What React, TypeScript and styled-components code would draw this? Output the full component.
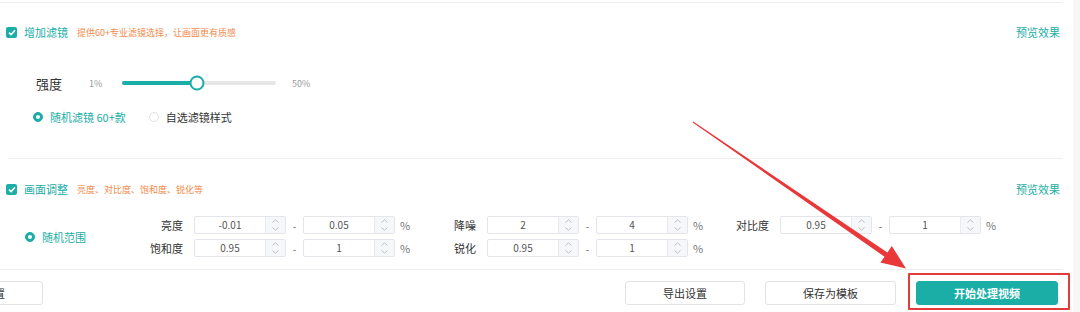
import React from "react";
import styled, { createGlobalStyle } from "styled-components";

const TEAL = "#1aaea6";
const ORANGE = "#f28a4c";

const Global = createGlobalStyle`
  html, body { margin: 0; padding: 0; background: #fff; }
  body { font-family: "Noto Sans CJK SC", "Noto Sans", sans-serif; color: #333; }
  * { box-sizing: border-box; }
`;

const Page = styled.div`
  position: relative;
  width: 1080px;
  height: 312px;
  overflow: hidden;
  display: flex;
`;

const Main = styled.div`
  flex: 1;
  display: flex;
  flex-direction: column;
  padding-top: 2px;
`;

const ScrollStrip = styled.div`
  width: 7px;
  background: #f7f7f8;
`;

const Content = styled.div`
  width: 1063px;
  display: flex;
  flex-direction: column;
`;

const Divider = styled.div<{ $mt: number; $ml?: number }>`
  height: 1px;
  background: #eeeeee;
  margin-top: ${(p) => p.$mt}px;
  margin-left: ${(p) => p.$ml ?? 0}px;
  border-radius: 0 0 2px 0;
`;

const Header = styled.div<{ $mt: number }>`
  height: 20px;
  margin-top: ${(p) => p.$mt}px;
  padding: 0 3px 0 6px;
  display: flex;
  align-items: center;
`;

const CheckBox = styled.span`
  width: 11px;
  height: 11px;
  border-radius: 2px;
  background: ${TEAL};
  display: inline-flex;
  align-items: center;
  justify-content: center;
  margin-right: 7px;
`;

const HeaderTitle = styled.span`
  font-size: 11px;
  color: ${TEAL};
  margin-right: 9px;
`;

const HeaderHint = styled.span`
  font-size: 9px;
  color: ${ORANGE};
  flex: 1;
`;

const PreviewLink = styled.span`
  font-size: 11px;
  color: ${TEAL};
`;

const SliderRow = styled.div`
  height: 20px;
  margin-top: 31px;
  padding-left: 36px;
  display: flex;
  align-items: center;
`;

const SliderLabel = styled.span`
  font-size: 13px;
  color: #333;
  width: 53px;
`;

const SmallNote = styled.span<{ $w: number }>`
  font-size: 9px;
  color: #999;
  width: ${(p) => p.$w}px;
`;

const Track = styled.div`
  position: relative;
  width: 154px;
  height: 4px;
  border-radius: 2px;
  background: #e6e6e6;
  margin-right: 16px;
`;

const Fill = styled.div`
  height: 100%;
  border-radius: 2px;
  background: ${TEAL};
`;

const Thumb = styled.div`
  position: absolute;
  top: 50%;
  width: 15px;
  height: 15px;
  border-radius: 50%;
  background: #fff;
  border: 2px solid ${TEAL};
  transform: translate(-50%, -50%);
`;

const RadioRow = styled.div`
  height: 20px;
  margin-top: 14px;
  padding-left: 33px;
  display: flex;
  align-items: center;
  gap: 23px;
`;

const RadioItem = styled.label<{ $on?: boolean; $w?: number }>`
  display: inline-flex;
  align-items: center;
  gap: 7px;
  font-size: 11px;
  color: ${(p) => (p.$on ? TEAL : "#333")};
  ${(p) => (p.$w ? `width: ${p.$w}px;` : "")}
`;

const RadioDot = styled.span<{ $on?: boolean }>`
  width: 10px;
  height: 10px;
  border-radius: 50%;
  background: ${(p) => (p.$on ? TEAL : "#fff")};
  border: 1px solid ${(p) => (p.$on ? TEAL : "#e2e2e2")};
  display: inline-flex;
  align-items: center;
  justify-content: center;
  &::after {
    content: "";
    width: 4px;
    height: 4px;
    border-radius: 50%;
    background: ${(p) => (p.$on ? "#fff" : "transparent")};
  }
`;

const RangeBlock = styled.div`
  margin-top: 17px;
  padding-left: 25px;
  display: flex;
  align-items: center;
`;

const FieldGrid = styled.div`
  display: grid;
  grid-template-columns: repeat(3, 273px);
  column-gap: 20px;
  row-gap: 5px;
`;

const Field = styled.div`
  display: flex;
  align-items: center;
  height: 18px;
`;

const FieldLabel = styled.span`
  width: 45px;
  text-align: right;
  font-size: 11px;
  color: #333;
  margin-right: 11px;
`;

const NumBox = styled.div`
  width: 92px;
  height: 18px;
  border: 1px solid #e3e5ea;
  border-radius: 2px;
  display: flex;
  background: #fff;
`;

const NumValue = styled.span`
  flex: 1;
  text-align: center;
  font-size: 10px;
  line-height: 16px;
  color: #555;
`;

const Spinner = styled.div`
  width: 20px;
  border-left: 1px solid #e8eaee;
  background: #f6f7f9;
  display: flex;
  flex-direction: column;
`;

const SpinHalf = styled.span`
  flex: 1;
  display: flex;
  align-items: center;
  justify-content: center;
`;

const Dash = styled.span`
  width: 17px;
  text-align: center;
  font-size: 10px;
  color: #666;
`;

const Pct = styled.span`
  width: 16px;
  padding-left: 5px;
  font-size: 11px;
  color: #777;
`;

const BottomBar = styled.div`
  margin-top: 11px;
  display: flex;
  align-items: center;
  gap: 20px;
  padding-right: 15px;
`;

const Btn = styled.button<{ $primary?: boolean }>`
  position: relative;
  height: 24px;
  padding: 0 37px;
  border-radius: 3px;
  font-family: inherit;
  font-size: 11px;
  white-space: nowrap;
  font-weight: ${(p) => (p.$primary ? 700 : 400)};
  color: ${(p) => (p.$primary ? "#fff" : "#333")};
  background: ${(p) => (p.$primary ? TEAL : "#fff")};
  border: 1px solid ${(p) => (p.$primary ? TEAL : "#e3e3e3")};
`;

const CutBtn = styled(Btn)`
  margin-left: -77px;
  margin-right: auto;
`;

const HighlightBox = styled.span`
  position: absolute;
  top: -9px;
  left: -9px;
  right: -13px;
  bottom: -6px;
  border: 2px solid #e23b3b;
  border-radius: 1px;
  pointer-events: none;
`;

const Overlay = styled.svg`
  position: absolute;
  left: 0;
  top: 0;
  pointer-events: none;
`;

const Chevron = ({ up }: { up?: boolean }) => (
  <svg width="7" height="4" viewBox="0 0 7 4">
    <path
      d={up ? "M0.5 3.5 L3.5 0.8 L6.5 3.5" : "M0.5 0.5 L3.5 3.2 L6.5 0.5"}
      fill="none"
      stroke="#b5b9c0"
      strokeWidth="0.9"
    />
  </svg>
);

const NumInput = ({ v }: { v: string }) => (
  <NumBox>
    <NumValue>{v}</NumValue>
    <Spinner>
      <SpinHalf>
        <Chevron up />
      </SpinHalf>
      <SpinHalf>
        <Chevron />
      </SpinHalf>
    </Spinner>
  </NumBox>
);

const Check = () => (
  <CheckBox>
    <svg width="8" height="7" viewBox="0 0 8 7">
      <path d="M1 3.6 L3.1 5.6 L7 1.2" fill="none" stroke="#fff" strokeWidth="1.5" />
    </svg>
  </CheckBox>
);

const fields: { label: string; a: string; b: string }[] = [
  { label: "亮度", a: "-0.01", b: "0.05" },
  { label: "降噪", a: "2", b: "4" },
  { label: "对比度", a: "0.95", b: "1" },
  { label: "饱和度", a: "0.95", b: "1" },
  { label: "锐化", a: "0.95", b: "1" },
];

export default function App() {
  const pct = 49;
  return (
    <>
      <Global />
      <Page>
        <Main>
          <Content>
            <Divider $mt={0} />
            <Header $mt={19}>
              <Check />
              <HeaderTitle>增加滤镜</HeaderTitle>
              <HeaderHint>提供60+专业滤镜选择，让画面更有质感</HeaderHint>
              <PreviewLink>预览效果</PreviewLink>
            </Header>
            <SliderRow>
              <SliderLabel>强度</SliderLabel>
              <SmallNote $w={33}>1%</SmallNote>
              <Track>
                <Fill style={{ width: `${pct}%` }} />
                <Thumb style={{ left: `${pct}%` }} />
              </Track>
              <SmallNote $w={30}>50%</SmallNote>
            </SliderRow>
            <RadioRow>
              <RadioItem $on>
                <RadioDot $on />
                随机滤镜 60+款
              </RadioItem>
              <RadioItem>
                <RadioDot />
                自选滤镜样式
              </RadioItem>
            </RadioRow>
            <Divider $mt={31} $ml={8} />
            <Header $mt={20}>
              <Check />
              <HeaderTitle>画面调整</HeaderTitle>
              <HeaderHint>亮度、对比度、饱和度、锐化等</HeaderHint>
              <PreviewLink>预览效果</PreviewLink>
            </Header>
            <RangeBlock>
              <RadioItem $on $w={113}>
                <RadioDot $on />
                随机范围
              </RadioItem>
              <FieldGrid>
                {fields.map((f) => (
                  <Field key={f.label}>
                    <FieldLabel>{f.label}</FieldLabel>
                    <NumInput v={f.a} />
                    <Dash>-</Dash>
                    <NumInput v={f.b} />
                    <Pct>%</Pct>
                  </Field>
                ))}
              </FieldGrid>
            </RangeBlock>
            <Divider $mt={12} />
          </Content>
          <BottomBar>
            <CutBtn>重置设置</CutBtn>
            <Btn>导出设置</Btn>
            <Btn>保存为模板</Btn>
            <Btn $primary>
              开始处理视频
              <HighlightBox />
            </Btn>
          </BottomBar>
        </Main>
        <ScrollStrip />
        <Overlay width="1080" height="312" viewBox="0 0 1080 312">
          <polygon
            points="693.3,121.6 887.4,252.6 891.8,246.0 906,268.5 880.4,262.6 884.6,256.8 692.7,122.4"
            fill="#e8383a"
          />
        </Overlay>
      </Page>
    </>
  );
}
